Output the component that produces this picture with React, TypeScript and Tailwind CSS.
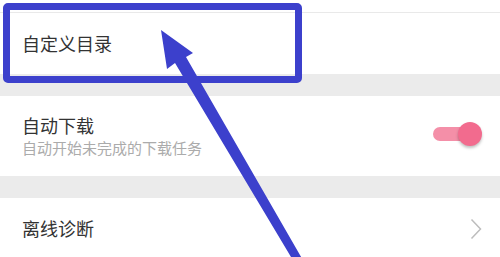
import React from "react";

export default function App() {
  return (
    <div
      className="relative w-[500px] h-[257px] overflow-hidden bg-white"
      style={{ fontFamily: '"Noto Sans CJK SC", "Noto Sans", sans-serif' }}
    >
      <div className="h-[12px] bg-white" />
      <div className="h-px bg-[#e9e9e9]" />
      <div className="h-[61px] flex items-center pl-[22px] text-[18px] text-[#333]">
        自定义目录
      </div>
      <div className="h-[22px] bg-[#ebebeb]" />
      <div className="h-[80px] flex items-center justify-between pl-[22px] pr-[18px]">
        <div className="flex flex-col gap-[1px] -mt-[2px]">
          <div className="text-[18px] leading-[24px] text-[#333]">自动下载</div>
          <div className="text-[15px] leading-[20px] text-[#ababab]">自动开始未完成的下载任务</div>
        </div>
        <div className="relative w-[49px] h-[24px] -mt-[4px]">
          <div className="absolute left-0 top-[5px] w-[36px] h-[14px] rounded-full bg-[#f48fa8]" />
          <div className="absolute right-0 top-0 w-[24px] h-[24px] rounded-full bg-[#f26b8e] shadow-[0_2px_3px_rgba(0,0,0,0.25)]" />
        </div>
      </div>
      <div className="h-[22px] bg-[#ebebeb]" />
      <div className="h-[64px] flex items-center justify-between pl-[22px] pr-[18px] -mt-[2px]">
        <div className="text-[18px] text-[#333]">离线诊断</div>
        <svg width="12" height="22" viewBox="0 0 12 22" className="mt-[2px]">
          <path d="M1.5 1.5 L10.5 11 L1.5 20.5" fill="none" stroke="#bdbdbd" strokeWidth="1.5" />
        </svg>
      </div>

      <div className="absolute left-[3px] top-[3px] w-[299px] h-[80px] rounded-[5px] border-[7px] border-[#3c40cc]" />
      <svg className="absolute left-0 top-0" width="500" height="257" viewBox="0 0 500 257">
        <polygon
          points="161,30 193,53 186,57 304,262 294,262 175,63 167,69"
          fill="#3c40cc"
        />
      </svg>
    </div>
  );
}
